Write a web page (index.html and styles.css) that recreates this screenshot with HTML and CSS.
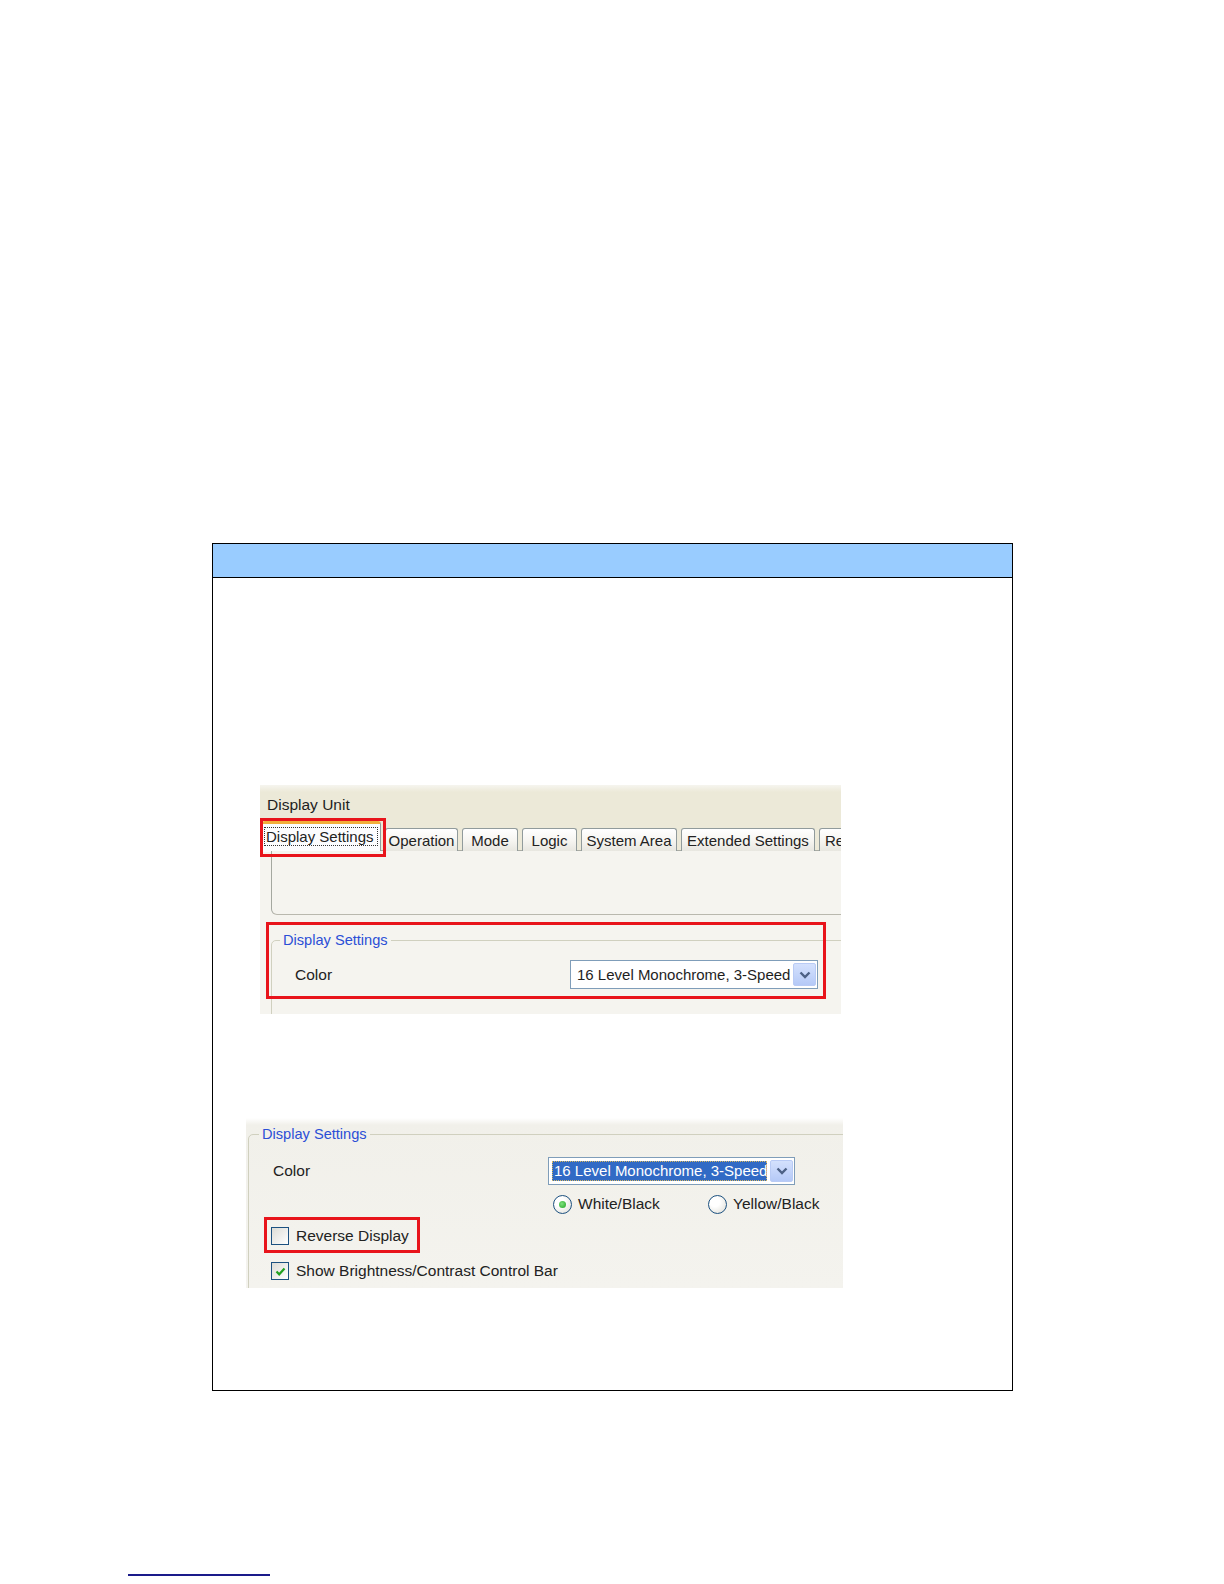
FILE: index.html
```html
<!DOCTYPE html>
<html>
<head>
<meta charset="utf-8">
<link rel="stylesheet" href="styles.css">
</head>
<body>
<div class="page">
  <div class="box">
    <div class="box-head"></div>
    <div class="box-body">
      <div class="shot shot1">
        <div class="s1-top">
          <div class="s1-title">Display Unit</div>
          <div class="tabs">
            <div class="tab tab-sel"><span class="focus">Display Settings</span></div>
            <div class="tab t-op">Operation</div>
            <div class="tab t-mode">Mode</div>
            <div class="tab t-logic">Logic</div>
            <div class="tab t-sys">System Area</div>
            <div class="tab t-ext">Extended Settings</div>
            <div class="tab t-re">Re</div>
          </div>
        </div>
        <div class="s1-panel">
          <div class="tabpage"></div>
          <fieldset class="group group1">
            <legend class="legend">Display Settings</legend>
            <div class="row-color">
              <span class="lbl">Color</span>
              <div class="combo combo1">
                <span class="combo-text">16 Level Monochrome, 3-Speed</span>
                <span class="combo-btn"><svg width="12" height="8" viewBox="0 0 12 8"><path d="M1.5 1.5 L6 6 L10.5 1.5" fill="none" stroke="#4d6185" stroke-width="2.4"/></svg></span>
              </div>
            </div>
          </fieldset>
        </div>
        <div class="redbox red1"></div>
        <div class="redbox red2"></div>
      </div>

      <div class="shot shot2">
        <fieldset class="group group2">
          <legend class="legend">Display Settings</legend>
          <div class="row-color2">
            <span class="lbl">Color</span>
            <div class="combo combo2">
              <span class="sel">16 Level Monochrome, 3-Speed</span>
              <span class="combo-btn"><svg width="12" height="8" viewBox="0 0 12 8"><path d="M1.5 1.5 L6 6 L10.5 1.5" fill="none" stroke="#4d6185" stroke-width="2.4"/></svg></span>
            </div>
          </div>
          <div class="row-radios">
            <span class="radio-item"><span class="radio"><span class="dot"></span></span>White/Black</span>
            <span class="radio-item"><span class="radio"></span>Yellow/Black</span>
          </div>
          <div class="row-check row-check1"><span class="check"></span>Reverse Display</div>
          <div class="row-check row-check2"><span class="check"><svg width="13" height="13" viewBox="0 0 13 13"><path d="M2.5 6.5 L5.2 9.3 L10.5 3.5" fill="none" stroke="#21a121" stroke-width="2.2"/></svg></span>Show Brightness/Contrast Control Bar</div>
        </fieldset>
        <div class="redbox red3"></div>
      </div>
    </div>
  </div>
  <div class="footer-line"></div>
</div>
</body>
</html>
```

FILE: styles.css
```css
html, body {
  margin: 0;
  padding: 0;
  background: #ffffff;
}
body {
  font-family: "Liberation Sans", Arial, sans-serif;
  color: #222;
}
.page {
  padding-top: 543px;
  padding-left: 212px;
  height: 1584px;
  box-sizing: border-box;
}
.box {
  width: 801px;
  border: 1px solid #000;
  box-sizing: border-box;
}
.box-head {
  height: 33px;
  background: #99ccff;
  border-bottom: 1px solid #000;
}
.box-body {
  padding: 207px 0 102px 0;
}
.shot {
  position: relative;
  overflow: hidden;
  font-size: 15.5px;
}

/* ---------- screenshot 1 ---------- */
.shot1 {
  margin-left: 47px;
  width: 581px;
  height: 229px;
  background: #f5f4ef;
}
.s1-top {
  height: 66px;
  background: linear-gradient(#f6f5ef 0px, #ece9d8 7px, #ece9d8 100%);
  display: flex;
  flex-direction: column;
  border-bottom: 1px solid #a9aba3;
  box-sizing: border-box;
}
.s1-title {
  padding: 10px 0 0 7px;
  height: 20px;
  line-height: 20px;
  color: #1e1e1e;
}
.tabs {
  margin-top: 7px;
  padding-left: 2px;
  display: flex;
  gap: 4px;
  align-items: flex-end;
  height: 29px;
  font-size: 15px;
}
.tab {
  flex: none;
  height: 24px;
  line-height: 24px;
  box-sizing: border-box;
  text-align: center;
  border: 1px solid #919b9c;
  border-bottom: none;
  border-radius: 3px 3px 0 0;
  background: linear-gradient(#ffffff, #f6f5f1 50%, #e6e5de);
  white-space: nowrap;
  color: #222;
  margin-bottom: -1px;
}
.tab-sel {
  width: 119px;
  height: 31px;
  line-height: 25px;
  background: #fcfcfe;
  border-top: 3px solid #f2ae3a;
  text-align: left;
  padding-left: 2px;
}
.t-op { width: 73px; }
.t-mode { width: 56px; }
.t-logic { width: 55px; }
.t-sys { width: 96px; }
.t-ext { width: 134px; }
.t-re { width: 40px; text-align: left; padding-left: 5px; }
.focus {
  outline: 1px dotted #333;
  outline-offset: 0;
  padding: 0 3px 0 1px;
}
.s1-panel {
  padding-left: 11px;
  display: flex;
  flex-direction: column;
}
.tabpage {
  height: 64px;
  border-left: 1px solid #a5a8a0;
  border-bottom: 1px solid #b9b8ae;
  border-bottom-left-radius: 6px;
  background: #f5f4ef;
  margin-right: -20px;
  box-sizing: border-box;
}
.group {
  margin: 0;
  padding: 0;
  border: 1px solid #d0d0bf;
  border-radius: 5px;
  min-width: 0;
}
.group1 {
  margin-top: 16px;
  margin-right: -30px;
  height: 120px;
}
.legend {
  color: #2b4fd6;
  padding: 0 3px;
  margin-left: 8px;
  font-size: 14.6px;
  line-height: 18px;
}
.row-color {
  display: flex;
  align-items: center;
  height: 29px;
  margin-top: 11px;
  padding-left: 23px;
}
.lbl {
  width: 275px;
  flex: none;
  color: #222;
}
.combo {
  width: 248px;
  height: 29px;
  box-sizing: border-box;
  border: 1px solid #7f9db9;
  background: #fff;
  display: flex;
  align-items: center;
  padding: 2px 1px 2px 2px;
  flex: none;
}
.combo-text {
  flex: 1;
  white-space: nowrap;
  overflow: hidden;
  padding-left: 4px;
  color: #1e1e1e;
  font-size: 15px;
}
.combo-btn {
  width: 23px;
  height: 23px;
  flex: none;
  border: 1px solid #b9cbf5;
  border-radius: 2px;
  background: linear-gradient(#d4e1fd, #b5c9f7);
  display: flex;
  align-items: center;
  justify-content: center;
  box-sizing: border-box;
  margin-left: 3px;
}
.redbox {
  position: absolute;
  border: 3px solid #e8141b;
  box-sizing: border-box;
}
.red1 {
  left: 0;
  top: 33px;
  width: 126px;
  height: 39px;
}
.red2 {
  left: 6px;
  top: 137px;
  width: 560px;
  height: 77px;
}

/* ---------- screenshot 2 ---------- */
.shot2 {
  margin-left: 33px;
  margin-top: 104px;
  width: 597px;
  height: 170px;
  background: linear-gradient(#ffffff 0px, #f1f0ea 7px, #f4f3ee 100%);
  padding: 7px 0 0 2px;
  box-sizing: border-box;
}
.group2 {
  margin-right: -30px;
  height: 200px;
  display: flex;
  flex-direction: column;
}
.group2 .legend {
  margin-left: 10px;
}
.row-color2 {
  display: flex;
  align-items: center;
  height: 28px;
  margin-top: 14px;
  padding-left: 24px;
}
.combo2 {
  width: 247px;
  height: 28px;
  padding: 2px 1px 2px 3px;
}
.combo2 .combo-btn {
  height: 22px;
}
.sel {
  flex: 1;
  height: 20px;
  line-height: 20px;
  white-space: nowrap;
  overflow: hidden;
  background: #316ac5;
  color: #fff;
  outline: 1px dotted #d8b860;
  outline-offset: -1px;
  padding-left: 2px;
  font-size: 15px;
}
.row-radios {
  display: flex;
  align-items: center;
  height: 20px;
  margin-top: 9px;
  padding-left: 304px;
}
.radio-item {
  display: flex;
  align-items: center;
  gap: 6px;
  width: 155px;
  flex: none;
}
.radio {
  width: 19px;
  height: 19px;
  border: 1px solid #1c5180;
  border-radius: 50%;
  background: radial-gradient(circle at 35% 35%, #ffffff 30%, #dcdbd3 100%);
  display: flex;
  align-items: center;
  justify-content: center;
  box-sizing: border-box;
  flex: none;
}
.dot {
  width: 7px;
  height: 7px;
  border-radius: 50%;
  background: radial-gradient(circle at 40% 40%, #7fe27f, #22a322);
}
.row-check {
  display: flex;
  align-items: center;
  gap: 7px;
  height: 24px;
  margin-left: 22px;
}
.row-check1 {
  margin-top: 10px;
}
.row-check2 {
  margin-top: 11px;
}
.check {
  width: 18px;
  height: 18px;
  border: 1px solid #1c5180;
  box-sizing: border-box;
  background: linear-gradient(135deg, #dcdcd6, #ffffff);
  display: flex;
  align-items: center;
  justify-content: center;
  flex: none;
}
.red3 {
  left: 18px;
  top: 99px;
  width: 156px;
  height: 36px;
}
.footer-line {
  margin-top: 183px;
  margin-left: -84px;
  width: 142px;
  height: 2px;
  background: #1a1a8a;
}
```
